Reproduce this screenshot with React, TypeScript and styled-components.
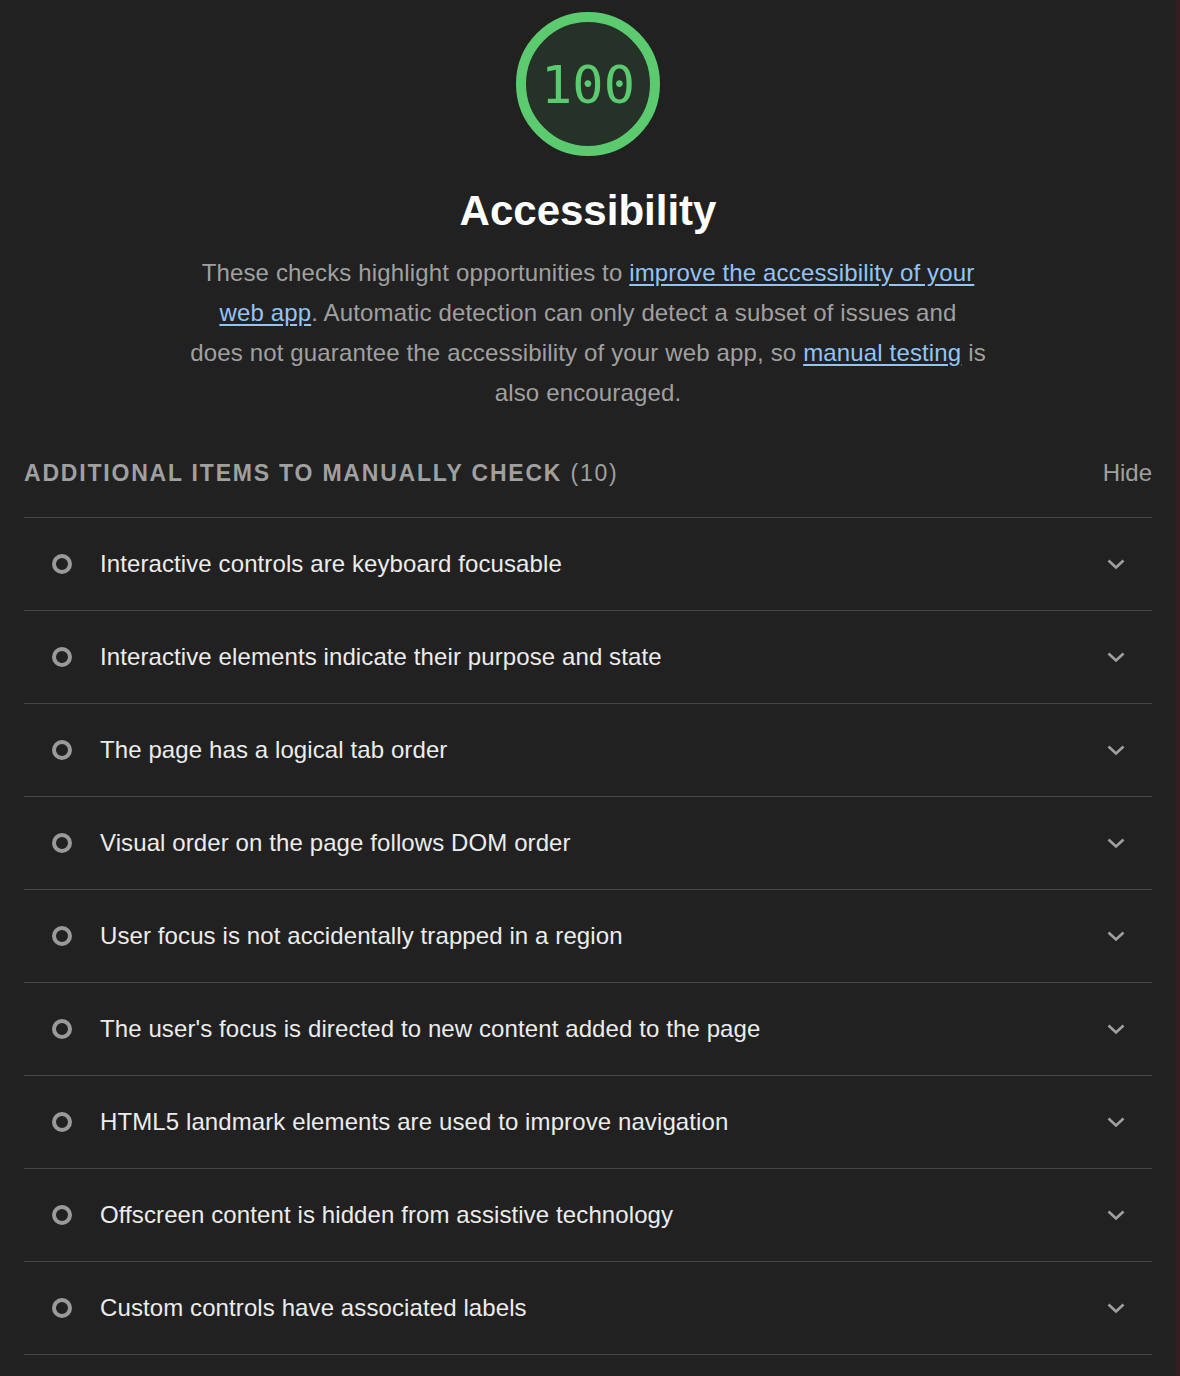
import React from "react";
import styled, { createGlobalStyle } from "styled-components";

const GlobalStyle = createGlobalStyle`
  html, body { margin: 0; padding: 0; background: #212121; }
  body { font-family: "Liberation Sans", Arial, Helvetica, sans-serif; }
`;

const Page = styled.div`
  box-sizing: border-box;
  min-height: 1376px;
  width: 1180px;
  background: #212121;
  border-right: 4px solid #371d21;
  padding: 12px 24px 0 24px;
  display: flex;
  flex-direction: column;
  overflow: hidden;
`;

const Summary = styled.header`
  display: flex;
  flex-direction: column;
  align-items: center;
`;

const GaugeWrap = styled.div`
  position: relative;
  width: 144px;
  height: 144px;
  display: flex;
  align-items: center;
  justify-content: center;
`;

const GaugeSvg = styled.svg`
  position: absolute;
  inset: 0;
`;

const Score = styled.span`
  position: relative;
  font-family: "DejaVu Sans Mono", Menlo, monospace;
  font-size: 52px;
  line-height: 1;
  color: #5ccb70;
  margin-top: 2px;
`;

const Title = styled.h1`
  margin: 30px 0 0;
  font-size: 42px;
  line-height: 50px;
  font-weight: 700;
  color: #ffffff;
`;

const Description = styled.p`
  margin: 17px 0 0;
  max-width: 830px;
  text-align: center;
  font-size: 24px;
  line-height: 40px;
  letter-spacing: 0.15px;
  color: #a0a0a0;
`;

const Link = styled.a`
  color: #93c4f5;
  text-decoration: underline;
  text-underline-offset: 3px;
`;

const GroupHeader = styled.div`
  margin-top: 45px;
  display: flex;
  align-items: center;
  justify-content: space-between;
  padding-bottom: 29px;
  border-bottom: 1px solid #464646;
  line-height: 30px;
`;

const GroupTitle = styled.span`
  font-size: 23px;
  font-weight: 700;
  letter-spacing: 1.8px;
  text-transform: uppercase;
  color: #a0a0a0;
`;

const Count = styled.span`
  font-weight: 400;
`;

const HideButton = styled.span`
  font-size: 24px;
  color: #a0a0a0;
`;

const Row = styled.div`
  display: flex;
  align-items: center;
  height: 92px;
  border-bottom: 1px solid #464646;
  padding: 0 27px 0 28px;
`;

const Marker = styled.span`
  box-sizing: border-box;
  width: 20px;
  height: 20px;
  border-radius: 50%;
  border: 4px solid #9a9a9a;
  flex: none;
`;

const RowText = styled.span`
  margin-left: 28px;
  flex: 1;
  font-size: 24px;
  letter-spacing: 0.1px;
  color: #ececec;
`;

const Chevron = () => (
  <svg width="18" height="11" viewBox="0 0 18 11" fill="none">
    <path d="M1.5 1.5 L9 8.5 L16.5 1.5" stroke="#a0a0a0" strokeWidth="2.6" />
  </svg>
);

const items = [
  "Interactive controls are keyboard focusable",
  "Interactive elements indicate their purpose and state",
  "The page has a logical tab order",
  "Visual order on the page follows DOM order",
  "User focus is not accidentally trapped in a region",
  "The user's focus is directed to new content added to the page",
  "HTML5 landmark elements are used to improve navigation",
  "Offscreen content is hidden from assistive technology",
  "Custom controls have associated labels",
];

export default function App() {
  return (
    <>
      <GlobalStyle />
      <Page>
        <Summary>
          <GaugeWrap>
            <GaugeSvg width="144" height="144" viewBox="0 0 144 144">
              <circle cx="72" cy="72" r="67" fill="#263128" stroke="#5ccb70" strokeWidth="10" />
            </GaugeSvg>
            <Score>100</Score>
          </GaugeWrap>
          <Title>Accessibility</Title>
          <Description>
            These checks highlight opportunities to{" "}
            <Link href="#">
              improve the accessibility of your
              <br />
              web app
            </Link>
            . Automatic detection can only detect a subset of issues and
            <br />
            does not guarantee the accessibility of your web app, so{" "}
            <Link href="#">manual testing</Link> is
            <br />
            also encouraged.
          </Description>
        </Summary>
        <GroupHeader>
          <GroupTitle>
            Additional items to manually check <Count>(10)</Count>
          </GroupTitle>
          <HideButton>Hide</HideButton>
        </GroupHeader>
        {items.map((t) => (
          <Row key={t}>
            <Marker />
            <RowText>{t}</RowText>
            <Chevron />
          </Row>
        ))}
      </Page>
    </>
  );
}
